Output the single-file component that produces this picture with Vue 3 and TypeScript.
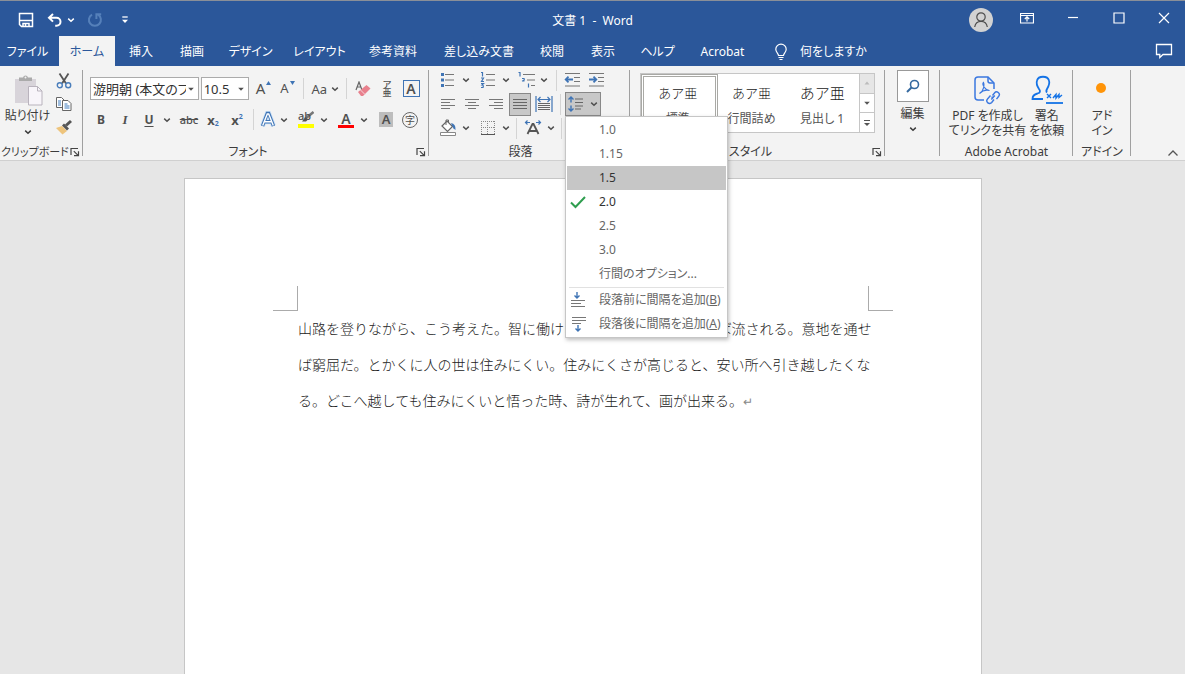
<script setup lang="ts">
import { ref } from 'vue'

const tabs: string[] = [
  'ファイル', 'ホーム', '挿入', '描画', 'デザイン', 'レイアウト',
  '参考資料', '差し込み文書', '校閲', '表示', 'ヘルプ', 'Acrobat',
]
const activeTab = ref('ホーム')

interface Spacing { label: string; strong?: boolean; checked?: boolean; hover?: boolean }
const spacings: Spacing[] = [
  { label: '1.0' },
  { label: '1.15' },
  { label: '1.5', strong: true, hover: true },
  { label: '2.0', strong: true, checked: true },
  { label: '2.5' },
  { label: '3.0' },
  { label: '行間のオプション...' },
]

const styles = [
  { name: '標準', selected: true, heading: false },
  { name: '行間詰め', selected: false, heading: false },
  { name: '見出し 1', selected: false, heading: true },
]

const lines: string[] = [
  '山路を登りながら、こう考えた。智に働けば角が立つ。情に棹させば流される。意地を通せ',
  'ば窮屈だ。とかくに人の世は住みにくい。住みにくさが高じると、安い所へ引き越したくな',
  'る。どこへ越しても住みにくいと悟った時、詩が生れて、画が出来る。',
]
</script>

<template>
  <div class="app">
    <svg class="defs" aria-hidden="true">
      <symbol id="chev" viewBox="0 0 8 8"><path d="M1.2 2.6 4 5.2 6.8 2.6" fill="none" stroke="currentColor" stroke-width="1.5" /></symbol>
      <symbol id="tri" viewBox="0 0 8 8"><path d="M1.2 2.7h5.6L4 5.7z" fill="currentColor" /></symbol>
      <symbol id="launch" viewBox="0 0 10 10"><path d="M1 8V1.5h7M3.8 4.2l4 4M8.5 4.2v4.5H4" fill="none" stroke="#444" stroke-width="1.2" /></symbol>
    </svg>

    <header class="top">
      <div class="titlebar">
        <div class="quick">
          <button class="q-save" aria-label="上書き保存">
            <svg width="16" height="16" viewBox="0 0 16 16" fill="none" stroke="#fff" stroke-width="1.5"><path d="M1.5 1.5h13v13h-11l-2-2z" /><path d="M2 8.5h12" /><path d="M5 14.5v-3h6v3" /><path d="M7.5 12v2.5" /></svg>
          </button>
          <button class="q-undo" aria-label="元に戻す">
            <svg width="16" height="14" viewBox="0 0 16 14" fill="none" stroke="#fff" stroke-width="2"><path d="M6 1 2 4.7 6 8.6M2.2 4.8h7.3a4 4 0 0 1 0 8H8.2" /></svg>
          </button>
          <button class="q-chev" aria-label="履歴"><svg width="8" height="8"><use href="#chev" /></svg></button>
          <button class="q-redo" aria-label="繰り返し">
            <svg width="16" height="16" viewBox="0 0 16 16" fill="none" stroke="#5580ba" stroke-width="2"><path d="M5 2.6A6 6 0 1 0 11 2.7M9.4 7V2.2h4.8" /></svg>
          </button>
          <button class="q-more" aria-label="カスタマイズ">
            <svg width="8" height="8" viewBox="0 0 8 8"><path d="M1.3 1h5.4" stroke="#fff" stroke-width="1.3" /><path d="M1 3.8h6L4 7z" fill="#fff" /></svg>
          </button>
        </div>
        <h1 class="title">文書 1&nbsp; -&nbsp; Word</h1>
        <div class="window">
          <button class="avatar" aria-label="アカウント">
            <svg width="24" height="24" viewBox="0 0 24 24"><circle cx="12" cy="12" r="12" fill="#d2d2d2" /><g fill="none" stroke="#4d4d4d" stroke-width="1.2"><circle cx="12" cy="9" r="4.2" /><path d="M5.7 19c.6-3.5 3-5.6 6.3-5.6s5.7 2.1 6.3 5.6" /></g></svg>
          </button>
          <button aria-label="リボンの表示オプション">
            <svg width="14" height="12" viewBox="0 0 14 12" fill="none" stroke="#fff"><path d="M.5 1.5h13V11H.5zM.5 3.5h13M7 9.5V5M4.8 7 7 4.9 9.2 7" stroke-width="1.2" /></svg>
          </button>
          <button aria-label="最小化"><svg width="12" height="12" viewBox="0 0 12 12"><path d="M1 5.5h10" stroke="#fff" stroke-width="1.2" /></svg></button>
          <button aria-label="最大化"><svg width="12" height="12" viewBox="0 0 12 12"><path d="M1 1h10v10H1z" fill="none" stroke="#fff" stroke-width="1.2" /></svg></button>
          <button class="close" aria-label="閉じる"><svg width="12" height="12" viewBox="0 0 12 12"><path d="m1 1 10 10M11 1 1 11" stroke="#fff" stroke-width="1.2" /></svg></button>
        </div>
      </div>
      <div class="tabbar">
        <nav class="tabs">
          <button v-for="t in tabs" :key="t" class="tab" :class="{ active: t === activeTab }" @click="activeTab = t">{{ t }}</button>
        </nav>
        <button class="tell">
          <svg width="14" height="18" viewBox="0 0 14 18" fill="none" stroke="#fff" stroke-width="1.2"><path d="M4.5 12.5c0-2-2.7-3-2.7-6.2a5.2 5.2 0 0 1 10.4 0c0 3.200-2.700 4.200-2.700 6.200zM4.500 14.500h5M5.500 16.500h3" /></svg>
          何をしますか
        </button>
        <button class="comment" aria-label="コメント">
          <svg width="18" height="16" viewBox="0 0 18 16" fill="none" stroke="#fff" stroke-width="1.3"><path d="M1.5 1.5h15v10H8l-3.2 3v-3H1.5z" /></svg>
        </button>
      </div>
    </header>

    <section class="ribbon">
      <div class="group clip">
        <div class="body clip-body">
          <button class="paste">
            <svg width="32" height="32" viewBox="0 0 32 32"><path d="M3 5h21v24H3z" fill="#d8d4da" /><path d="M7 7V3.5h4a2.6 2.6 0 0 1 5 0h4V7z" fill="#aaa" /><circle cx="13.5" cy="3.5" r="1" fill="#f3f3f3" /><path d="M16.5 12.5h9l4.5 4.5v14H16.5z" fill="#f8f5fa" stroke="#b9b3bd" /><path d="M25.5 12.5V17H30" fill="none" stroke="#b9b3bd" /></svg>
            <span>貼り付け</span>
            <svg width="8" height="8"><use href="#chev" /></svg>
          </button>
          <div class="clip-tools">
            <button aria-label="切り取り"><svg width="16" height="16" viewBox="0 0 16 16" fill="none"><path d="M3.5.5 10 10.5M12.5.5 6 10.5" stroke="#555" stroke-width="1.8" /><circle cx="3.8" cy="12.3" r="2.5" stroke="#4a7ebb" stroke-width="1.4" /><circle cx="12.2" cy="12.3" r="2.5" stroke="#4a7ebb" stroke-width="1.4" /></svg></button>
            <button aria-label="コピー"><svg width="16" height="16" viewBox="0 0 16 16" fill="#fff" stroke="#666"><path d="M.5 1.5h5l3 3v7h-8z" /><path d="M6.5 4.5H12l3 3v7H6.500z" /><path d="M2 5h3M2 7h3M2 9h3M8.5 8h3M8.5 10h5M8.5 12h5" stroke="#3f7cbf" /></svg></button>
            <button aria-label="書式のコピー"><svg width="16" height="16" viewBox="0 0 16 16"><path d="m0 9 6-2 5 5-4.5 3.5z" fill="#eec47c" /><path d="m6 6.5 2-2 5 5-2 2z" fill="#555" /><path d="m10 6.5 5-4.5" stroke="#555" stroke-width="3" /></svg></button>
          </div>
        </div>
        <div class="foot"><span>クリップボード</span><button aria-label="クリップボードの詳細"><svg width="10" height="10"><use href="#launch" /></svg></button></div>
      </div>

      <div class="group font">
        <div class="body font-body">
          <div class="row r-first">
            <label class="combo name"><select aria-label="フォント"><option>游明朝 (本文のフォント)</option></select><svg width="8" height="8"><use href="#tri" /></svg></label>
            <label class="combo size"><select aria-label="フォント サイズ"><option>10.5</option></select><svg width="8" height="8"><use href="#tri" /></svg></label>
            <button class="b24 big" aria-label="拡大">A<svg width="5" height="4" viewBox="0 0 5 4"><path d="M0 4h5L2.500 0z" fill="#3f74b5" /></svg></button>
            <button class="b24 small" aria-label="縮小">A<svg width="5" height="4" viewBox="0 0 5 4"><path d="M0 0h5L2.500 4z" fill="#3f74b5" /></svg></button>
            <i class="sep" />
            <button class="case">Aa<svg width="8" height="8"><use href="#chev" /></svg></button>
            <i class="sep" />
            <button class="b24" aria-label="書式のクリア"><svg width="16" height="16" viewBox="0 0 16 16"><path d="m1 9 3-8 3 8M2.2 6h3.6" fill="none" stroke="#666" stroke-width="1.2" /><path d="m3 11 8.5-7 4 3.5L8 15H6z" fill="#e8808d" /><path d="m5.5 9 4.5 4.5" stroke="#f7d5da" /></svg></button>
            <button class="b24 ruby" aria-label="ルビ"><span>ア</span><span>亜</span></button>
            <button class="b24"><span class="boxed">A</span></button>
          </div>
          <div class="row r-second">
            <button class="b24 bold">B</button>
            <button class="b24 ital">I</button>
            <button class="b24 under">U</button>
            <button class="b12" aria-label="下線の種類"><svg width="8" height="8"><use href="#chev" /></svg></button>
            <i class="gap" />
            <button class="b24 strike">abc</button>
            <button class="b24 script">x<sub>2</sub></button>
            <button class="b24 script">x<sup>2</sup></button>
            <i class="sep" />
            <button class="b24 glow" aria-label="文字の効果"><svg width="16" height="18" viewBox="0 0 16 18"><path d="M2.5 15 7.3 2.5h1.4L13.500 15M4.500 10.800h7" fill="none" stroke="#c9dff5" stroke-width="5" /><path d="M2.500 15 7.300 2.500h1.400L13.500 15M4.500 10.800h7" fill="none" stroke="#3f74b5" stroke-width="3.400" /><path d="M2.700 14.500 7.300 3h1.400l4.600 11.500M4.500 10.800h7" fill="none" stroke="#fff" stroke-width="1.400" /></svg></button>
            <button class="b12" aria-label="効果の種類"><svg width="8" height="8"><use href="#chev" /></svg></button>
            <i class="gap" />
            <button class="b24 mark"><span>ab</span><svg width="16" height="18" viewBox="0 0 16 18"><path d="M15.500 1 7 8" stroke="#777" stroke-width="2.500" /><path d="m7 6.500-3 4h4l1.500-1.500z" fill="#555" /><path d="M0 13h16v4H0z" fill="#ff0" /></svg></button>
            <button class="b12" aria-label="蛍光ペンの色"><svg width="8" height="8"><use href="#chev" /></svg></button>
            <i class="gap" />
            <button class="b24"><span class="red">A</span></button>
            <button class="b12" aria-label="フォントの色"><svg width="8" height="8"><use href="#chev" /></svg></button>
            <i class="gap" />
            <button class="b24"><span class="shade">A</span></button>
            <button class="b24"><span class="ring">字</span></button>
          </div>
        </div>
        <div class="foot"><span>フォント</span><button aria-label="フォントの詳細"><svg width="10" height="10"><use href="#launch" /></svg></button></div>
      </div>

      <div class="group para">
        <div class="body para-body">
          <div class="row">
            <button class="b24" aria-label="箇条書き"><svg width="16" height="16" viewBox="0 0 16 16"><path d="M5 2.500h9M5 8h9M5 13.500h9" stroke="#777" stroke-width="1.200" /><path d="M1 1h3v3H1zM1 6.500h3v3H1zM1 12h3v3H1z" fill="#3f74b5" /></svg></button>
            <button class="b12" aria-label="記号"><svg width="8" height="8"><use href="#chev" /></svg></button><i class="gap" />
            <button class="b24" aria-label="段落番号"><svg width="16" height="16" viewBox="0 0 16 16" fill="none"><path d="M6 2.500h9M6 8h9M6 13.500h9" stroke="#777" stroke-width="1.200" /><path d="M1 .5h1.500V4.500M1 6h2.500l-2 3.500H4M1 11.500h2.500L2 13q2 0 1 2.500H1" stroke="#3f74b5" stroke-width="1.200" /></svg></button>
            <button class="b12" aria-label="番号"><svg width="8" height="8"><use href="#chev" /></svg></button><i class="gap" />
            <button class="multi" aria-label="アウトライン"><svg width="18" height="16" viewBox="0 0 18 16" fill="none"><path d="M5 2.500h12M9 8h8M13 13.500h4" stroke="#777" stroke-width="1.200" /><path d="M.5.500H2V4.500M4 6.500h2q1 2-2 2.500h2.500M10.500 11.500v4" stroke="#3f74b5" stroke-width="1.200" /></svg></button>
            <button class="b12" aria-label="リスト"><svg width="8" height="8"><use href="#chev" /></svg></button>
            <i class="sep wide" />
            <button class="b24" aria-label="インデントを減らす"><svg width="18" height="16" viewBox="0 0 18 16" fill="none"><path d="M1 1.500h15M10 5.500h6M10 9.500h6M1 14h15" stroke="#777" stroke-width="1.200" /><path d="M9 7.500H2M4.500 4.700 1.700 7.500l2.800 2.800" stroke="#3f74b5" stroke-width="1.800" /></svg></button>
            <button class="b24" aria-label="インデントを増やす"><svg width="18" height="16" viewBox="0 0 18 16" fill="none"><path d="M1 1.500h15M10 5.500h6M10 9.500h6M1 14h15" stroke="#777" stroke-width="1.200" /><path d="M1 7.500h7M5.500 4.700l2.800 2.800-2.800 2.800" stroke="#3f74b5" stroke-width="1.800" /></svg></button>
          </div>
          <div class="row">
            <button class="b24" aria-label="左揃え"><svg width="14" height="12" viewBox="0 0 14 12"><path d="M0 1.500h14M0 4.500h9M0 7.500h14M0 10.500h9" stroke="#777" /></svg></button>
            <button class="b24" aria-label="中央揃え"><svg width="14" height="12" viewBox="0 0 14 12"><path d="M0 1.500h14M3 4.500h8M0 7.500h14M3 10.500h8" stroke="#777" /></svg></button>
            <button class="b24" aria-label="右揃え"><svg width="14" height="12" viewBox="0 0 14 12"><path d="M0 1.500h14M5 4.500h9M0 7.500h14M5 10.500h9" stroke="#777" /></svg></button>
            <button class="b24 on" aria-label="両端揃え"><svg width="14" height="12" viewBox="0 0 14 12"><path d="M0 1.500h14M0 4.500h14M0 7.500h14M0 10.500h14" stroke="#666" /></svg></button>
            <button class="b24" aria-label="均等割り付け"><svg width="18" height="16" viewBox="0 0 18 16" fill="none"><path d="M1 0v16M17 0v16M3 3.500h12M5.500 1 3 3.500 5.500 6M12.500 1 15 3.500 12.500 6" stroke="#3f74b5" stroke-width="1.200" /><path d="M3 7.500h12M3 9.500h12M3 11.500h12M3 13.500h12" stroke="#666" /></svg></button>
            <i class="sep" />
            <div class="spacing">
              <button class="spacing-btn" aria-label="行と段落の間隔" aria-haspopup="menu">
                <svg width="16" height="16" viewBox="0 0 16 16" fill="none"><path d="M7 3h8M7 6.500h8M7 10h8M7 13h6" stroke="#666" stroke-width="1.200" /><path d="M3 1v5.500M3 9.500V15M.5 3.500 3 1l2.500 2.500M.5 12.500 3 15l2.500-2.500" stroke="#3f74b5" stroke-width="1.400" /></svg>
                <svg width="8" height="8"><use href="#chev" /></svg>
              </button>
              <div class="menu" role="menu">
                <button v-for="s in spacings" :key="s.label" class="item" :class="{ hover: s.hover, strong: s.strong }" role="menuitem">
                  <span class="mark-col"><svg v-if="s.checked" width="16" height="14" viewBox="0 0 16 14"><path d="m1 7.500 4.500 4.500L15 2" fill="none" stroke="#2f9e4f" stroke-width="2" /></svg></span>{{ s.label }}
                </button>
                <hr>
                <button class="item" role="menuitem">
                  <span class="mark-col"><svg width="16" height="16" viewBox="0 0 16 16" fill="none"><path d="M1 8.500h14M1 11.500h10M1 14.500h14" stroke="#777" /><path d="M7 0v6M4.500 3.500 7 6l2.500-2.500" stroke="#3f74b5" stroke-width="1.400" /></svg></span>段落前に間隔を追加(<u>B</u>)
                </button>
                <button class="item" role="menuitem">
                  <span class="mark-col"><svg width="16" height="16" viewBox="0 0 16 16" fill="none"><path d="M2 1.500h14M2 4.500h14M2 7.500h9" stroke="#777" /><path d="M8 9v6M5.500 12.500 8 15l2.500-2.500" stroke="#3f74b5" stroke-width="1.400" /></svg></span>段落後に間隔を追加(<u>A</u>)
                </button>
              </div>
            </div>
          </div>
          <div class="row">
            <button class="b24" aria-label="塗りつぶし"><svg width="18" height="18" viewBox="0 0 18 18" fill="none"><path d="m3 7 5-5 5.500 5.500-5 5z" fill="#fff" stroke="#666" stroke-width="1.200" /><path d="M7 6V1h2.500v3" stroke="#666" /><path d="M12 4q5 1 4.500 7l-2-1.500-1.500-3z" fill="#3f74b5" /><path d="M1.500 13.500h15v3h-15z" fill="#fff" stroke="#888" /></svg></button>
            <button class="b12" aria-label="塗りつぶしの色"><svg width="8" height="8"><use href="#chev" /></svg></button><i class="gap" />
            <button class="b24" aria-label="罫線"><svg width="14" height="14" viewBox="0 0 14 14" shape-rendering="crispEdges"><path d="M0 .5h14M0 6.500h14M.5 0v14M6.500 0v14M13.500 0v14" fill="none" stroke="#888" stroke-dasharray="1 1" /><path d="M0 13.500h14" stroke="#555" /></svg></button>
            <button class="b12" aria-label="罫線の種類"><svg width="8" height="8"><use href="#chev" /></svg></button>
            <i class="sep" />
            <button class="b24" aria-label="拡張書式"><svg width="18" height="16" viewBox="0 0 18 16" fill="none"><path d="M3.500 14 8.500 4h1l5 10M5.500 11h7" stroke="#555" stroke-width="1.800" /><path d="M6 2.500H1.500M3.500.5l-2 2 2 2M12 2.500h4.500M14.500.5l2 2-2 2" stroke="#3f74b5" stroke-width="1.200" /></svg></button>
            <button class="b12" aria-label="書式"><svg width="8" height="8"><use href="#chev" /></svg></button>
            <i class="sep" />
          </div>
        </div>
        <div class="foot"><span>段落</span></div>
      </div>

      <div class="group style">
        <div class="body gallery">
          <button v-for="s in styles" :key="s.name" class="cell" :class="{ selected: s.selected, heading: s.heading }">
            <span class="sample">あア亜</span><span>{{ s.name }}</span>
          </button>
          <div class="scroll">
            <button class="off" aria-label="上へ"><svg width="8" height="8" viewBox="0 0 8 8"><path d="M1.500 5.500h5L4 2.500z" fill="#bbb" /></svg></button>
            <button aria-label="下へ"><svg width="8" height="8"><use href="#tri" /></svg></button>
            <button aria-label="その他"><svg width="8" height="8" viewBox="0 0 8 8"><path d="M1 1.500h6" stroke="#555" /><path d="M1 4h6L4 7z" fill="#555" /></svg></button>
          </div>
        </div>
        <div class="foot"><span>スタイル</span><button aria-label="スタイルの詳細"><svg width="10" height="10"><use href="#launch" /></svg></button></div>
      </div>

      <div class="group edit">
        <button class="find">
          <span class="find-box"><svg width="14" height="14" viewBox="0 0 14 14" fill="none" stroke="#35699f"><circle cx="8.500" cy="5.500" r="4" stroke-width="1.600" /><path d="M5.500 8.500 1 13" stroke-width="2" /></svg></span>
          <span>編集</span>
          <svg width="8" height="8"><use href="#chev" /></svg>
        </button>
      </div>

      <div class="group acro">
        <div class="body acro-body">
          <button class="tall">
            <svg width="28" height="30" viewBox="0 0 28 30" fill="none" stroke="#3b78e0" stroke-width="1.500"><path d="M11 25H5a3 3 0 0 1-3-3V5a3 3 0 0 1 3-3h10l6 6v6" /><path d="M15 2v4a2 2 0 0 0 2 2h4" /><path d="M6.500 18.500c5-3 5-9.500 4-11-2 2 2 8 6 8-4-1-7 0-10 3z" stroke-width="1.200" /><path d="m19.500 20.500 2-2.500a2.600 2.600 0 0 1 4.200 3.300l-2.200 2.900M20 22.500l-1.500-.5M17.500 20.500l-3 3.500a2.600 2.600 0 0 0 4.200 3.500l2.300-3M18.300 24.500l3.500-4" stroke-width="1.400" /></svg>
            <span>PDF を作成し<br>てリンクを共有</span>
          </button>
          <button class="tall">
            <svg width="32" height="30" viewBox="0 0 32 30" fill="none" stroke="#1473e6" stroke-width="1.800"><path d="M12 24H1.500c0-3.500 2-4.800 5-5.500 3-.8 3-2.500 1.500-4.500C6 11 5 8.500 6 5.500c1.500-5 10.500-5 12 0 1 3-.5 6-2 8.500-1 1.700-1 2.500 0 3.500" /><path d="m16 19 4 4m0-4-4 4" stroke-width="1.400" /><path d="m22 23 3-3.500v3.500l3-3.500v3l3-2.500" stroke-width="1.400" /><path d="M15 28h17" /></svg>
            <span>署名<br>を依頼</span>
          </button>
        </div>
        <div class="foot"><span>Adobe Acrobat</span></div>
      </div>

      <div class="group addin">
        <div class="body acro-body">
          <button class="tall">
            <svg width="28" height="30" viewBox="0 0 28 30"><circle cx="13" cy="13" r="5" fill="#ff9408" /></svg>
            <span>アド<br>イン</span>
          </button>
        </div>
        <div class="foot"><span>アドイン</span></div>
      </div>
      <div class="rest">
        <button aria-label="リボンを折りたたむ"><svg width="12" height="8" viewBox="0 0 12 8"><path d="m1.500 6.500 4.500-4.500 4.500 4.500" fill="none" stroke="#555" stroke-width="1.300" /></svg></button>
      </div>
    </section>

    <main class="canvas">
      <article class="page">
        <div class="corners"><i class="corner left" /><i class="corner right" /></div>
        <div class="text">
          <p v-for="(l, i) in lines" :key="i">{{ l }}<span v-if="i === lines.length - 1" class="ret">↵</span></p>
        </div>
      </article>
    </main>
  </div>
</template>

<style>
body { margin: 0; background: #e6e6e6; }
</style>

<style scoped>
* { box-sizing: border-box; }
.app {
  min-height: 100vh;
  display: flex;
  flex-direction: column;
  overflow: hidden;
  font: 12px/16px "Noto Sans", "Noto Sans CJK JP", sans-serif;
  font-feature-settings: "palt";
  color: #3c3c3c;
}
.defs { position: absolute; width: 0; height: 0; }
button {
  display: flex;
  align-items: center;
  justify-content: center;
  padding: 0;
  border: 0;
  background: none;
  color: inherit;
  font: inherit;
  font-feature-settings: inherit;
  white-space: nowrap;
}
svg { flex: none; display: block; }

.top { background: #2b579a; color: #fff; border-top: 1px solid #8a8f98; }
.titlebar { height: 35px; display: grid; grid-template-columns: 1fr auto 1fr; align-items: center; padding-top: 3px; }
.quick { display: flex; align-items: center; padding-left: 18px; }
.q-save { width: 16px; }
.q-undo { width: 16px; margin-left: 13px; }
.q-chev { width: 16px; }
.q-redo { width: 16px; margin-left: 8px; }
.q-more { width: 8px; margin-left: 18px; }
.title { margin: 0; padding-top: 2px; font-size: 12px; font-weight: 400; white-space: pre; font-feature-settings: normal; }
.window { display: flex; justify-content: flex-end; align-items: center; }
.window button { width: 46px; height: 24px; padding-bottom: 5px; }
.window .avatar { padding: 0; }
.window .close { width: 43px; }
.tabbar { display: flex; height: 30px; }
.tabs { display: grid; grid-template-columns: 59px 56px 52px 50px 67px 71px 76px 96px 50px 52px 57px 73px; }
.tab, .tell { padding-top: 2px; }
.tab:first-child { padding-right: 4px; }
.tab.active { background: #f3f3f3; color: #2b579a; }
.tell { margin-left: 15px; gap: 12px; }
.comment { margin-left: auto; margin-right: 12px; }

.ribbon { display: flex; height: 95px; background: #f3f3f3; border-bottom: 1px solid #d0d0d0; }
.group { position: relative; display: flex; flex-direction: column; flex: none; }
.group::after { content: ""; position: absolute; right: 0; top: 4px; bottom: 4px; width: 1px; background: #a0a0a0; }
.body { flex: 1; min-height: 0; }
.foot { height: 16px; display: flex; align-items: center; justify-content: center; position: relative; }
.foot button { position: absolute; right: 3px; top: 3px; }
.clip { width: 83px; }
.font { width: 346px; }
.para { width: 201px; }
.style { width: 255px; }
.edit { width: 55px; }
.acro { width: 133px; }
.addin { width: 58px; }
.rest { flex: 1; display: flex; justify-content: flex-end; align-items: flex-end; padding: 0 6px 3px 0; }

.clip-body { display: flex; }
.clip .foot { justify-content: flex-start; padding-left: 1px; font-size: 11px; }
.font .foot { padding-right: 16px; }
.paste { flex-direction: column; justify-content: flex-start; width: 55px; padding-top: 8px; }
.paste span { margin: 2px 0 4px; }
.clip-tools { padding-top: 3px; }
.clip-tools button { width: 18px; height: 23px; }

.row { display: flex; align-items: center; height: 23px; color: #505050; }
.b24 { width: 24px; height: 23px; }
.b12 { width: 12px; height: 23px; }
.gap { width: 4px; }
.sep { width: 1px; height: 21px; margin: 0 4px; background: #d4d4d4; }
.font-body { padding: 11px 6px 0; }
.r-second { margin-top: 8px; }
.combo { position: relative; height: 23px; background: #fff; border: 1px solid #ababab; }
.combo select {
  width: 100%;
  height: 21px;
  padding: 0 12px 0 2px;
  border: 0;
  background: none;
  appearance: none;
  color: #333;
  font: 13px/20px "Noto Sans", "Noto Sans CJK JP", sans-serif;
  font-feature-settings: "palt";
}
.combo svg { position: absolute; right: 3px; top: 7px; pointer-events: none; }
.name { width: 109px; margin-left: 1px; }
.size { width: 48px; margin: 0 3px 0 2px; }
.big, .small { align-items: flex-start; gap: 1px; line-height: 23px; }
.big { font-size: 15px; }
.small { font-size: 13px; }
.big svg, .small svg { margin-top: 4px; }
.case { width: 34px; gap: 4px; font-size: 13px; }
.ruby { flex-direction: column; font-size: 9px; line-height: 8px; font-weight: 500; }
.boxed { width: 17px; height: 17px; border: 1px solid #3f74b5; font-size: 14px; line-height: 15px; font-weight: 600; }
.bold { font-weight: 700; }
.ital { font-family: "Liberation Serif", serif; font-style: italic; font-weight: 700; font-size: 13px; }
.under { font-weight: 700; text-decoration: underline; text-underline-offset: 2px; }
.strike { font-size: 11px; text-decoration: line-through; font-weight: 500; }
.script { font-weight: 700; font-size: 13px; }
.script sub, .script sup { color: #3f74b5; font-size: 7px; line-height: 8px; }
.script sub { align-self: flex-end; margin-bottom: 3px; }
.script sup { align-self: flex-start; margin-top: 5px; }
.glow { width: 20px; }
.mark { position: relative; }
.mark span { position: absolute; left: 4px; top: 0; font-size: 11px; font-weight: 500; }
.red { width: 16px; height: 17px; border-bottom: 3px solid #f00; font-size: 14px; line-height: 15px; font-weight: 600; }
.shade { width: 14px; height: 15px; background: #bdbdbd; font-size: 13px; line-height: 15px; font-weight: 600; }
.ring { width: 16px; height: 16px; border: 1px solid #666; border-radius: 50%; font-size: 10px; line-height: 14px; }

.para-body { padding: 2px 0 0 7px; }
.para .foot { padding-right: 18px; }
.para .row { height: 24px; }
.multi { width: 22px; height: 23px; }
.wide { margin: 0 4px 0 6px; }
.on { background: #c8c8c8; border: 1px solid #888; width: 22px; margin: 0 1px; }
.spacing { position: relative; z-index: 2; }
.spacing-btn { width: 36px; height: 24px; gap: 6px; background: #c8c8c8; border: 1px solid #888; }
.menu {
  position: absolute;
  left: 0;
  top: 24px;
  width: 163px;
  padding: 1px;
  background: #fff;
  border: 1px solid #c6c6c6;
  box-shadow: 1px 2px 4px rgba(0, 0, 0, 0.25);
}
.menu hr { margin: 1px 2px 0; border: 0; height: 1px; background: #e1e1e1; }
.item { width: 100%; height: 24px; justify-content: flex-start; color: #666; }
.item.strong { color: #333; }
.item.hover { background: #c6c6c6; }
.mark-col { width: 32px; padding-left: 3px; }

.gallery { flex: none; display: flex; height: 60px; margin: 7px 10px 0; background: #fff; border: 1px solid #c6c6c6; }
.style .foot { margin-top: auto; padding-right: 14px; }
.cell { flex: 1; flex-direction: column; gap: 9px; color: #555; padding: 6px 3px 0 0; }
.cell.selected { border: 3px double #a9a9a5; }
.sample { color: #222; font-size: 13px; line-height: 17px; font-weight: 300; font-feature-settings: normal; }
.heading .sample { font-size: 15px; }
.scroll { width: 15px; display: flex; flex-direction: column; border-left: 1px solid #c6c6c6; }
.scroll button { flex: 1; color: #555; }
.scroll button + button { border-top: 1px solid #c6c6c6; }
.scroll .off { background: #e6e6e6; }

.find { flex-direction: column; padding-top: 4px; }
.find-box { width: 32px; height: 32px; display: flex; align-items: center; justify-content: center; background: #fff; border: 1px solid #999; margin-bottom: 4px; }
.find > svg { margin-top: 3px; }
.acro-body { display: flex; justify-content: center; gap: 3px; padding-top: 9px; }
.tall { flex-direction: column; justify-content: flex-start; line-height: 15px; }
.tall span { margin-top: 3px; }

.canvas { flex: 1; display: flex; justify-content: center; padding: 17px 19px 0 0; background: #e6e6e6; }
.page { width: 798px; background: #fff; border: 1px solid #c6c6c6; border-bottom: 0; padding: 107px 88px 0; }
.corners { display: flex; justify-content: space-between; }
.corner { width: 25px; height: 25px; border-bottom: 1px solid #ababab; }
.left { border-right: 1px solid #ababab; }
.right { border-left: 1px solid #ababab; }
.text { padding-left: 25px; margin-top: -1px; font: 14px/36px "Noto Sans CJK JP", sans-serif; font-weight: 300; font-feature-settings: normal; color: #222; }
.text p { margin: 0; white-space: nowrap; }
.ret { color: #888; font-size: 12px; }
</style>
